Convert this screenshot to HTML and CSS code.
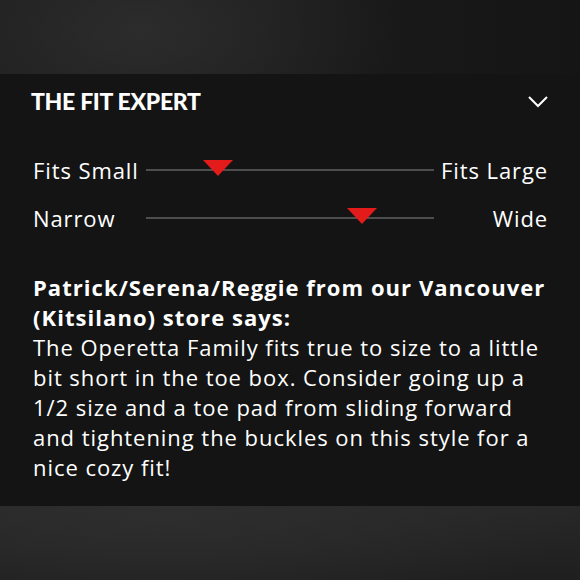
FILE: index.html
```html
<!DOCTYPE html>
<html lang="en">
<head>
<meta charset="utf-8">
<title>The Fit Expert</title>
<link rel="stylesheet" href="styles.css">
</head>
<body>
<div class="band band-top"></div>
<section class="panel">
  <header class="panel-head">
    <h2 class="panel-title">THE FIT EXPERT</h2>
    <svg class="chevron" width="20" height="12" viewBox="0 0 20 12" aria-hidden="true">
      <polyline points="1,1 10,10 19,1" fill="none" stroke="#fff" stroke-width="2"/>
    </svg>
  </header>
  <div class="scales">
    <div class="scale">
      <span class="scale-label left">Fits Small</span>
      <div class="track"><span class="marker" style="left:25%"></span></div>
      <span class="scale-label right">Fits Large</span>
    </div>
    <div class="scale">
      <span class="scale-label left">Narrow</span>
      <div class="track"><span class="marker" style="left:75%"></span></div>
      <span class="scale-label right">Wide</span>
    </div>
  </div>
  <p class="note">
    <strong class="note-author">Patrick/Serena/Reggie from our Vancouver (Kitsilano) store says:</strong>
    The Operetta Family fits true to size to a little bit short in the toe box. Consider going up a 1/2 size and a toe pad from sliding forward and tightening the buckles on this style for a nice cozy fit!
  </p>
</section>
<div class="band band-bottom"></div>
</body>
</html>
```
FILE: styles.css
```css
html, body {
  margin: 0;
  padding: 0;
  height: 580px;
  background: #141414;
}
body {
  display: flex;
  flex-direction: column;
  font-family: "Open Sans", "Noto Sans", sans-serif;
  color: #fff;
}
.band {
  flex: none;
}
.band-top {
  height: 74px;
  background:
    radial-gradient(ellipse 260px 140px at 140px 30px, #2c2c2c 0%, rgba(44,44,44,0) 100%),
    linear-gradient(90deg, #1d1d1d 0%, #1c1c1c 40%, #151515 100%);
}
.band-bottom {
  flex: 1;
  background:
    radial-gradient(ellipse 420px 120px at 160px 0px, #2e2e2e 0%, rgba(46,46,46,0) 100%),
    linear-gradient(180deg, #282828 0%, #1f1f1f 100%);
}
.panel {
  background: #141414;
  padding: 12px 33px 0 33px;
  box-sizing: border-box;
  height: 432px;
}
.panel-head {
  display: flex;
  align-items: center;
  justify-content: space-between;
  height: 30px;
}
.panel-title {
  margin: 0 0 0 -2px;
  font-family: Lato, "Open Sans", sans-serif;
  font-size: 23px;
  font-weight: 900;
  letter-spacing: -0.3px;
}
.chevron {
  margin: 2px -1px 0 0;
  display: block;
}
.scales {
  margin-top: 39px;
  display: flex;
  flex-direction: column;
  gap: 18px;
}
.scale {
  display: grid;
  grid-template-columns: 113px 1fr 113px;
  align-items: center;
  height: 30px;
}
.scale-label {
  font-size: 22px;
  line-height: 30px;
  letter-spacing: 0.9px;
  white-space: nowrap;
}
.scale-label.right {
  text-align: right;
  margin-right: -1px;
}
.track {
  position: relative;
  height: 2px;
  background: #4e4e4e;
}
.marker {
  position: absolute;
  top: -9px;
  width: 0;
  height: 0;
  margin-left: -15px;
  border-left: 15px solid transparent;
  border-right: 15px solid transparent;
  border-top: 16px solid #e41b1b;
}
.note {
  margin: 39px 0 0 0;
  font-size: 22px;
  line-height: 30px;
  letter-spacing: 0.95px;
}
.note-author {
  display: block;
  font-weight: 700;
  letter-spacing: 1.05px;
}
```
